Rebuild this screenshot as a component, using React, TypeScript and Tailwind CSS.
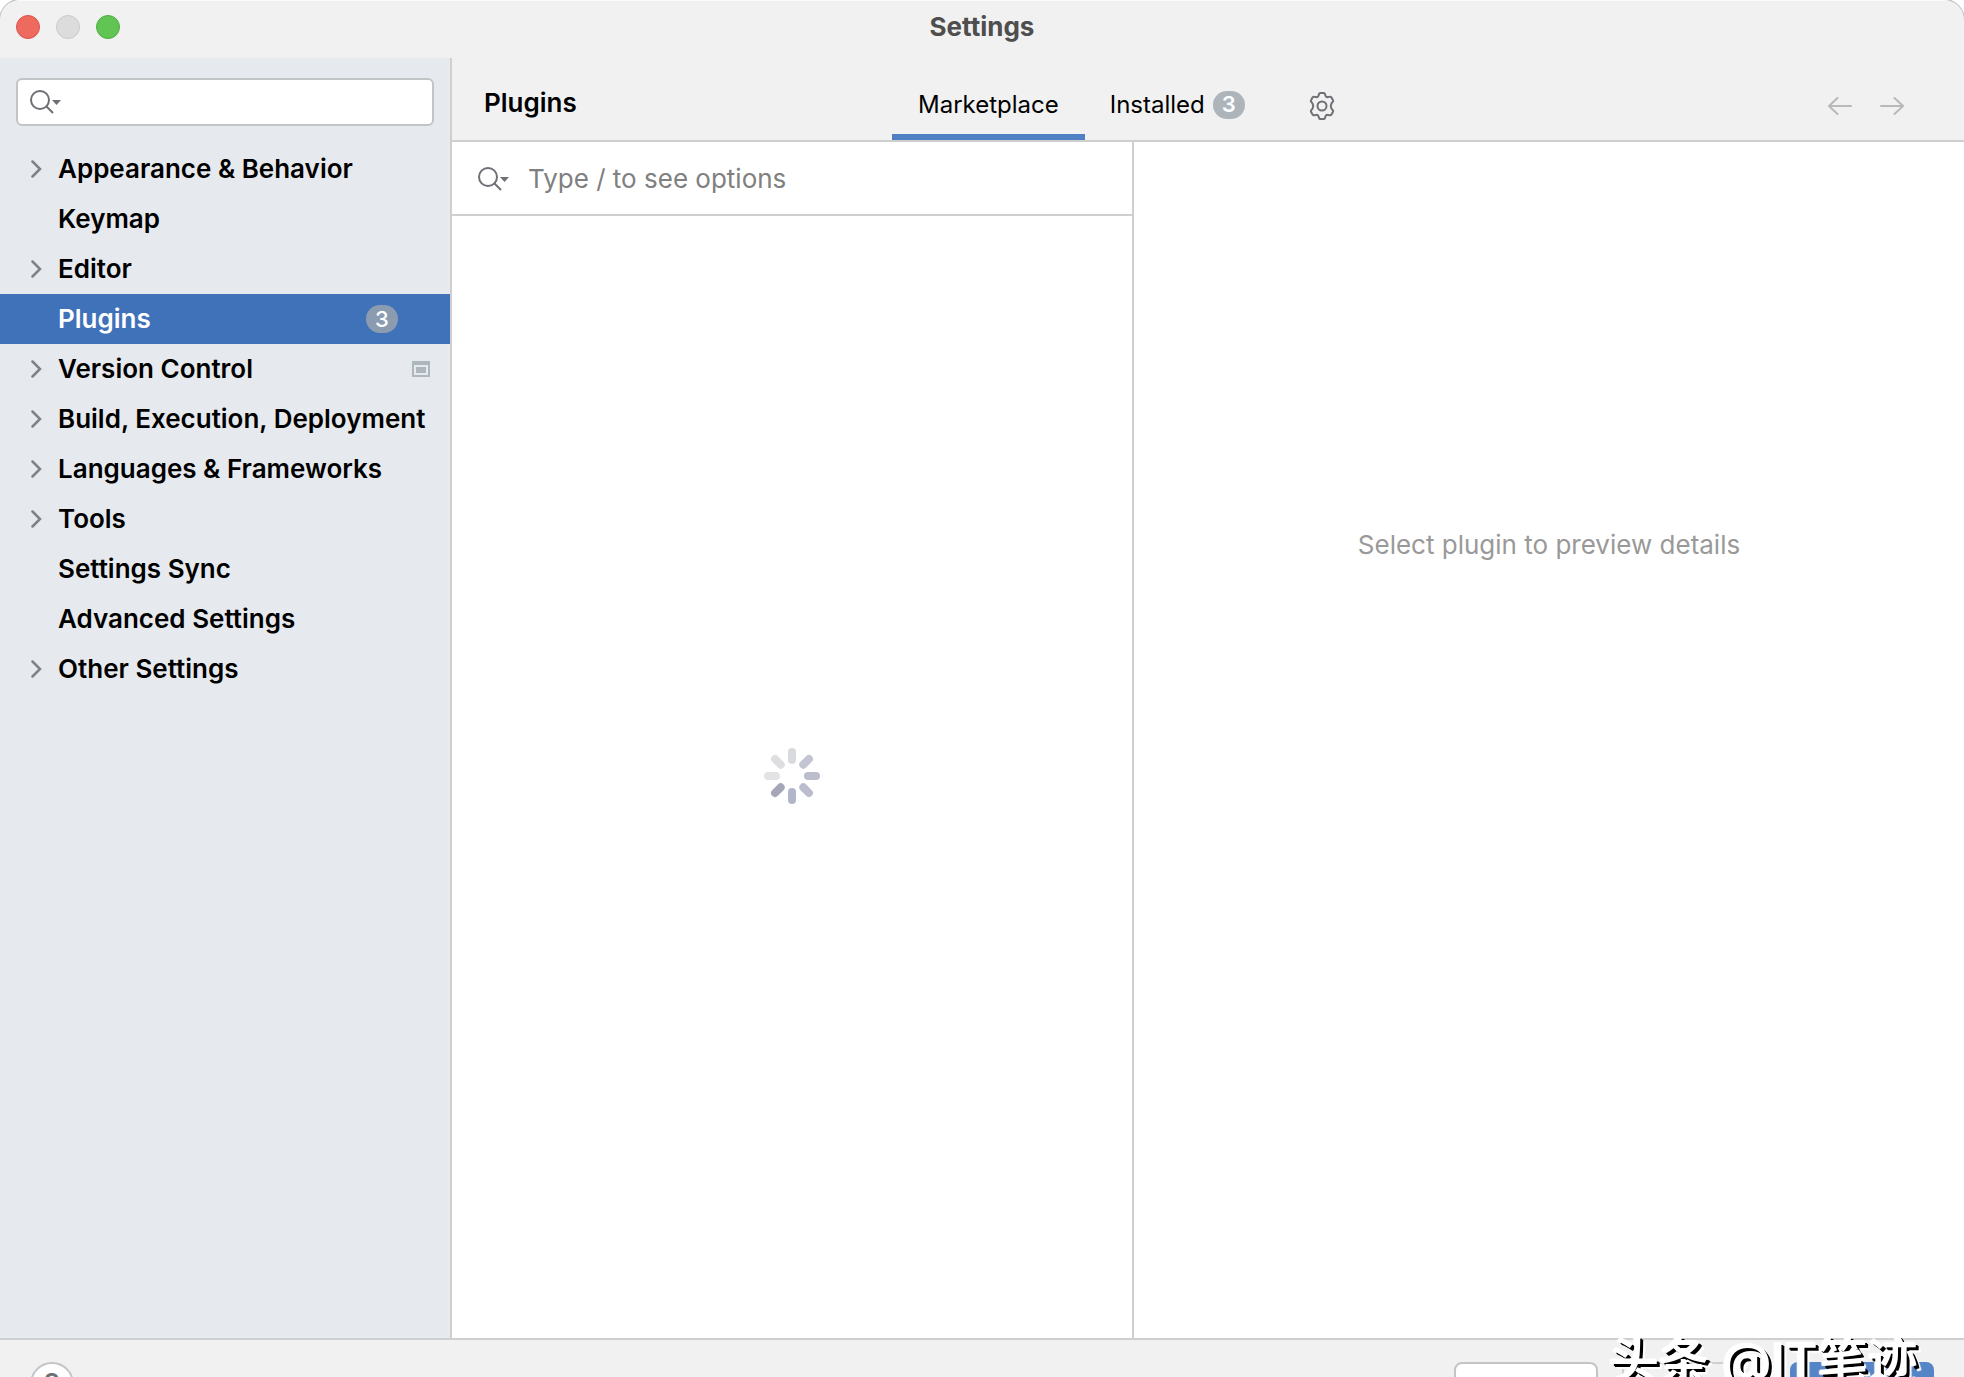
import { useState } from "react";

const navItems = [
  { label: "Appearance & Behavior", expandable: true },
  { label: "Keymap" },
  { label: "Editor", expandable: true },
  { label: "Plugins", count: 3 },
  { label: "Version Control", expandable: true, projectLevel: true },
  { label: "Build, Execution, Deployment", expandable: true },
  { label: "Languages & Frameworks", expandable: true },
  { label: "Tools", expandable: true },
  { label: "Settings Sync" },
  { label: "Advanced Settings" },
  { label: "Other Settings", expandable: true },
];

// one entry per spoke, clockwise from the top
const spokes = ["#d9dade", "#c4c5d3", "#bcbdcb", "#bbbccd", "#b3b5ca", "#a5a6b8", "#e3e3e5", "#dedee0"];

const gearHalf =
  "M14 2h1.700q.9 0 1.200.9l.7 2q.6 1.500 2.200 1.200l2.100-.4q.9-.2 1.400.6l1.700 2.900q.5.8-.1 1.500l-1.400 1.600q-1.500 2.700 0 5.400l1.400 1.600q.6.7.1 1.500l-1.700 2.900q-.5.8-1.400.6l-2.100-.4q-1.600-.3-2.200 1.200l-.7 2q-.3.9-1.200.9H14";

const SearchIcon = () => (
  <svg width="34" height="26" viewBox="0 0 34 26" fill="none" className="shrink-0" aria-hidden="true">
    <circle cx="11" cy="11" r="9" stroke="#6e7076" strokeWidth="2" />
    <path d="M17.500 17.500 24 24" stroke="#6e7076" strokeWidth="2" />
    <path d="M23 11h9l-4.500 5z" fill="#6e7076" />
  </svg>
);

const Chevron = () => (
  <svg width="12" height="18" viewBox="0 0 12 18" fill="none" aria-hidden="true">
    <path d="M1.500 1.500 9 9l-7.500 7.500" stroke="#7f8186" strokeWidth="2.500" strokeLinecap="round" />
  </svg>
);

const ProjectIcon = () => (
  <svg width="18" height="16" viewBox="0 0 18 16" aria-hidden="true">
    <path d="M0 0h18v16H0zM2 4v10h14V4z" fill="#aeb7be" fillRule="evenodd" />
    <path d="M4 6h10v6H4z" fill="#aeb7be" />
  </svg>
);

const GearIcon = () => (
  <svg width="28" height="30" viewBox="0 0 28 30" fill="none" stroke="#6e7076" strokeWidth="2" strokeLinejoin="round" aria-hidden="true">
    <path d={gearHalf} />
    <path d={gearHalf} transform="matrix(-1 0 0 1 28 0)" />
    <circle cx="14" cy="15" r="4.500" />
  </svg>
);

const Arrow = ({ className = "" }) => (
  <svg width="24" height="18" viewBox="0 0 24 18" fill="none" stroke="#b9b9b9" strokeWidth="2" strokeLinecap="round" className={className} aria-hidden="true">
    <path d="M23 9H1M9.500 1 1 9l8.500 8" />
  </svg>
);

const Spinner = () => (
  <svg width="56" height="56" viewBox="-28 -28 56 56" strokeWidth="8" strokeLinecap="round" role="img" aria-label="Loading">
    {spokes.map((color, i) => (
      <path key={i} d="M0-16v-8" stroke={color} transform={`rotate(${i * 45})`} />
    ))}
  </svg>
);

export default function App() {
  const [selected, setSelected] = useState("Plugins");
  const [tab, setTab] = useState("Marketplace");

  return (
    <div className="relative flex h-screen flex-col overflow-hidden rounded-t-[20px] bg-[#f1f1f1] font-['Inter',sans-serif] text-[26px] leading-8 text-black shadow-[0_0_0_1px_#bdbdbd]">
      {/* title bar */}
      <header className="grid h-[58px] shrink-0 grid-cols-[1fr_auto_1fr] items-center border-t border-[#fafafa] px-4 pb-[5px]">
        <div className="flex gap-4">
          <button type="button" aria-label="Close" className="size-6 rounded-full border border-[#d6544a] bg-[#ee6a5f]" />
          <button type="button" aria-label="Minimize" className="size-6 rounded-full border border-[#c9c9c9] bg-[#dcdcdc]" />
          <button type="button" aria-label="Zoom" className="size-6 rounded-full border border-[#51ab40] bg-[#61c554]" />
        </div>
        <h1 className="font-bold text-[#4e4e4e]">Settings</h1>
      </header>

      <div className="flex min-h-0 flex-1">
        <aside className="w-[452px] shrink-0 border-r-2 border-[#cfcfcf] bg-[#e6e9ed]">
          <div className="px-4 pt-5">
            <label className="flex h-12 items-center rounded-md border-2 border-[#c3c4c6] bg-white px-[11px]">
              <SearchIcon />
              <input type="text" aria-label="Search settings" className="min-w-0 flex-1 px-2 outline-none" />
            </label>
          </div>
          <nav className="mt-[18px]">
            {navItems.map((item) => (
              <button
                key={item.label}
                type="button"
                onClick={() => setSelected(item.label)}
                className={`flex h-[50px] w-full items-center pr-5 pl-[31px] text-left font-semibold whitespace-nowrap ${selected === item.label ? "bg-[#3f72b9] text-white" : ""}`}
              >
                <span className="w-[27px] shrink-0">{item.expandable && <Chevron />}</span>
                <span className="flex-1">{item.label}</span>
                {item.count && (
                  <span className="mr-8 flex h-7 w-8 items-center justify-center rounded-full bg-[#8b9bb0] text-[22px] font-medium text-white">{item.count}</span>
                )}
                {item.projectLevel && <ProjectIcon />}
              </button>
            ))}
          </nav>
        </aside>

        <main className="flex min-w-0 flex-1 flex-col">
          <div className="flex h-[84px] shrink-0 border-b-2 border-[#cfcfcf]">
            <h2 className="w-[440px] pt-[29px] pl-8 font-semibold">Plugins</h2>
            <div role="tablist" className="flex text-2xl">
              <button
                type="button"
                role="tab"
                aria-selected={tab === "Marketplace"}
                onClick={() => setTab("Marketplace")}
                className={`border-b-6 px-[26px] pt-[18px] ${tab === "Marketplace" ? "border-[#4f80c4]" : "border-transparent"}`}
              >
                Marketplace
              </button>
              <button
                type="button"
                role="tab"
                aria-selected={tab === "Installed"}
                onClick={() => setTab("Installed")}
                className={`flex items-center gap-2 border-b-6 px-[25px] pt-[18px] ${tab === "Installed" ? "border-[#4f80c4]" : "border-transparent"}`}
              >
                Installed
                <span className="flex h-7 w-8 items-center justify-center rounded-full bg-[#adb5bb] text-[22px] font-semibold text-white">3</span>
              </button>
            </div>
            <button type="button" aria-label="Plugin settings" className="ml-[38px] pt-3.5">
              <GearIcon />
            </button>
            <div className="ml-auto flex gap-7 pt-3.5 pr-[60px]">
              <button type="button" aria-label="Back" disabled><Arrow /></button>
              <button type="button" aria-label="Forward" disabled><Arrow className="rotate-180" /></button>
            </div>
          </div>

          <div className="flex min-h-0 flex-1 bg-white">
            <section className="flex w-[682px] shrink-0 flex-col border-r-2 border-[#cfcfcf]">
              <label className="flex h-[74px] shrink-0 items-center gap-[17px] border-b-2 border-[#cfcfcf] pt-0.5 pl-[25px]">
                <SearchIcon />
                <input type="text" aria-label="Search plugins" placeholder="Type / to see options" className="min-w-0 flex-1 outline-none placeholder:text-[#808080]" />
              </label>
              <div className="flex flex-1 items-center justify-center pb-0.5">
                <Spinner />
              </div>
            </section>
            <section className="flex-1 pt-[387px] text-center text-[#999999]">
              <p>Select plugin to preview details</p>
            </section>
          </div>
        </main>
      </div>

      <footer className="flex h-[39px] shrink-0 items-start gap-6 overflow-hidden border-t-2 border-[#cfcfcf] px-[30px] pt-[22px]">
        <button type="button" aria-label="Help" className="mr-auto size-11 shrink-0 rounded-full border-2 border-[#c3c4c6] bg-white text-[30px] font-medium text-[#6e7076]">?</button>
        <button type="button" className="h-[54px] w-36 rounded-lg border-2 border-[#c3c4c6] bg-white">Cancel</button>
        <button type="button" disabled className="h-[54px] w-36 rounded-lg border-2 border-[#cfcfcf] text-[#8c8c8c]">Apply</button>
        <button type="button" className="h-[54px] w-36 rounded-lg bg-[#5585c6] text-white">OK</button>
      </footer>

      {/* watermark, cut off by the window's bottom edge */}
      <div className="pointer-events-none absolute right-[46px] -bottom-[18px] font-['Inter','Noto_Sans_CJK_SC',sans-serif] text-[50px] leading-[68px] font-medium whitespace-nowrap text-white [text-shadow:-1px_-1px_0_#fff,3px_3px_0_#000,2px_2px_0_#000,-2px_0_1px_#fff,5px_5px_1px_#fff]">
        头条 @IT笔迹
      </div>
    </div>
  );
}
